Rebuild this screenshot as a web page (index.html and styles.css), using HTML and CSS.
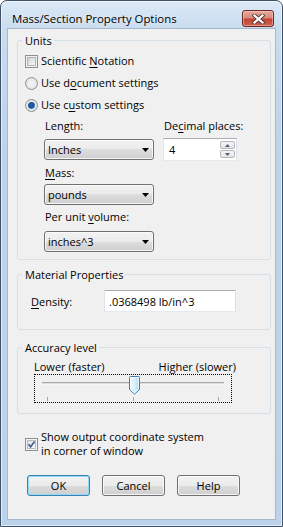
FILE: index.html
```html
<!DOCTYPE html>
<html>
<head>
<meta charset="utf-8">
<title>Mass/Section Property Options</title>
<link rel="stylesheet" href="styles.css">
</head>
<body>
<div class="window">
  <div class="titlebar">
    <span class="title">Mass/Section Property Options</span>
    <div class="close">
      <svg width="13" height="10" viewBox="0 0 13 10">
        <path d="M2.5 1.5 L10.5 8.5 M10.5 1.5 L2.5 8.5" stroke="#5a3b38" stroke-width="4.2" stroke-linecap="square" fill="none"/>
        <path d="M2.5 1.5 L10.5 8.5 M10.5 1.5 L2.5 8.5" stroke="#ffffff" stroke-width="2.2" stroke-linecap="square" fill="none"/>
      </svg>
    </div>
  </div>
  <div class="client">
    <fieldset class="group units">
      <legend>Units</legend>
      <div class="opt opt-sci">
        <span class="checkbox"><span class="box-in"></span></span>
        <span>Scientific <u>N</u>otation</span>
      </div>
      <div class="opt opt-radio">
        <span class="radio"></span>
        <span>Use d<u>o</u>cument settings</span>
      </div>
      <div class="opt opt-radio">
        <span class="radio checked"></span>
        <span>Use c<u>u</u>stom settings</span>
      </div>
      <div class="unit-fields">
        <div class="col-left">
          <div class="field-label">Length:</div>
          <div class="combo combo-length"><span>Inches</span><svg class="arrow" width="7" height="4" viewBox="0 0 7 4"><path d="M0 0 H7 L3.5 4 Z" fill="#000"/></svg></div>
          <div class="field-label label-mass"><u>M</u>ass:</div>
          <div class="combo combo-mass"><span>pounds</span><svg class="arrow" width="7" height="4" viewBox="0 0 7 4"><path d="M0 0 H7 L3.5 4 Z" fill="#000"/></svg></div>
          <div class="field-label label-volume">Per unit <u>v</u>olume:</div>
          <div class="combo combo-volume"><span>inches^3</span><svg class="arrow" width="7" height="4" viewBox="0 0 7 4"><path d="M0 0 H7 L3.5 4 Z" fill="#000"/></svg></div>
        </div>
        <div class="col-right">
          <div class="field-label">De<u>c</u>imal places:</div>
          <div class="spin">
            <span class="spin-value">4</span>
            <div class="spin-buttons">
              <span class="spin-btn"><svg width="5" height="3" viewBox="0 0 5 3"><path d="M0 3 H5 L2.5 0 Z" fill="#4d6185"/></svg></span>
              <span class="spin-btn"><svg width="5" height="3" viewBox="0 0 5 3"><path d="M0 0 H5 L2.5 3 Z" fill="#4d6185"/></svg></span>
            </div>
          </div>
        </div>
      </div>
    </fieldset>

    <fieldset class="group material">
      <legend>Material Properties</legend>
      <div class="density-row">
        <span class="density-label"><u>D</u>ensity:</span>
        <div class="text-input">.0368498 lb/in^3</div>
      </div>
    </fieldset>

    <fieldset class="group accuracy">
      <legend>Accuracy level</legend>
      <div class="accuracy-labels">
        <span>Lower (faster)</span>
        <span>Higher (slower)</span>
      </div>
      <div class="slider">
        <div class="track"></div>
        <div class="ticks"><span></span><span></span><span></span></div>
        <svg class="thumb" width="11" height="19" viewBox="0 0 11 19">
          <defs>
            <linearGradient id="tg" x1="0" y1="0" x2="1" y2="0">
              <stop offset="0" stop-color="#f4fbfe"/>
              <stop offset="0.5" stop-color="#d9f1fc"/>
              <stop offset="1" stop-color="#a9dcf6"/>
            </linearGradient>
          </defs>
          <path d="M1.5 0.5 H9.5 Q10.5 0.5 10.5 1.5 V13.5 L5.5 18.2 L0.5 13.5 V1.5 Q0.5 0.5 1.5 0.5 Z" fill="url(#tg)" stroke="#3c7fb1"/>
          <path d="M1.5 1.5 H9.5 V13 L5.5 16.8 L1.5 13 Z" fill="none" stroke="#ffffff" stroke-opacity="0.7"/>
        </svg>
      </div>
    </fieldset>

    <div class="opt-coord">
      <span class="checkbox checked"><span class="box-in"><svg width="9" height="9" viewBox="0 0 9 9"><path d="M1.5 4.2 L3.6 6.8 L7.6 1.4" stroke="#4a5f97" stroke-width="1.7" fill="none"/></svg></span></span>
      <span class="coord-text">Show output coordinate system<br>in corner of window</span>
    </div>

    <div class="buttons">
      <div class="btn default">OK</div>
      <div class="btn">Cancel</div>
      <div class="btn">Help</div>
    </div>
  </div>
</div>
</body>
</html>
```

FILE: styles.css
```css
* { box-sizing: border-box; }

html, body {
  margin: 0;
  padding: 0;
}

body {
  width: 283px;
  height: 527px;
  overflow: hidden;
  font-family: "Open Sans", "Noto Sans", sans-serif;
  font-size: 11px;
  color: #000;
  background: #ffffff;
}

u {
  text-decoration-thickness: 1px;
  text-underline-offset: 2px;
}

.window {
  width: 283px;
  height: 527px;
  display: flex;
  flex-direction: column;
  border: 1px solid #3f5268;
  border-radius: 7px 7px 0 0;
  background: linear-gradient(to bottom, #dce9f6 0px, #c9dcf0 27px, #bed4eb 140px, #bbd2ea 100%);
  box-shadow: inset 0 0 0 1px rgba(255, 255, 255, 0.55);
}

.titlebar {
  height: 27px;
  flex: none;
  display: flex;
  justify-content: space-between;
  align-items: flex-start;
  padding: 9px 8px 0 11px;
}

.title {
  font-size: 11.4px;
  line-height: 17px;
  white-space: nowrap;
  text-shadow: 0 0 6px rgba(255, 255, 255, 0.9);
}

.close {
  width: 32px;
  height: 17px;
  border: 1px solid #6b2a24;
  border-radius: 3px;
  background: linear-gradient(to bottom, #e7a899 0%, #d88b7c 45%, #c34434 55%, #d0604f 100%);
  box-shadow: inset 0 0 0 1px rgba(255, 220, 210, 0.45);
  display: flex;
  align-items: center;
  justify-content: center;
}

.client {
  flex: 1;
  margin: 0 6px 6px 6px;
  border: 1px solid #a5b8cc;
  background: #f0f0f0;
}

/* group boxes */
.group {
  margin: 0 4px 0 9px;
  padding: 0 0 0 4px;
  border: 1px solid #d5dfe5;
  border-radius: 3px;
  min-width: 0;
}

.group legend {
  padding: 0 2px 0 3px;
  line-height: 15px;
}

.units {
  margin-top: 4px;
  padding-bottom: 7px;
}

.material {
  margin-top: 7px;
  padding-bottom: 17px;
}

.accuracy {
  margin-top: 10px;
  padding-bottom: 10px;
}

/* options */
.opt {
  display: flex;
  align-items: center;
  height: 16px;
  margin-left: 3px;
  line-height: 16px;
  white-space: nowrap;
}

.opt-sci { margin-top: 5px; }
.opt-radio { margin-top: 6px; }

.checkbox {
  width: 13px;
  height: 13px;
  flex: none;
  border: 1px solid #8e8f8f;
  background: #f4f4f4;
  padding: 1px;
  margin-right: 3px;
}

.box-in {
  display: block;
  width: 9px;
  height: 9px;
  border: 1px solid #aeb3b9;
  background: linear-gradient(135deg, #cbcfd5 0%, #e4e6e9 50%, #f7f7f7 100%);
  position: relative;
}

.checkbox.checked .box-in {
  border-color: #b8bcc2;
  background: linear-gradient(135deg, #dfe2e6 0%, #eef0f2 60%, #fafafa 100%);
}

.box-in svg {
  position: absolute;
  left: -1px;
  top: -1px;
}

.radio {
  width: 13px;
  height: 13px;
  flex: none;
  border-radius: 50%;
  border: 1px solid #8e8f8f;
  background: radial-gradient(circle at 50% 50%, #f6f6f6 0%, #e9e9e9 55%, #d2d4d6 100%);
  margin-right: 3px;
  display: flex;
  align-items: center;
  justify-content: center;
}

.radio.checked::before {
  content: "";
  width: 7px;
  height: 7px;
  border-radius: 50%;
  background: radial-gradient(circle at 45% 40%, #2a67b0 0%, #16508f 45%, #4d9ee0 80%, #9cd2f4 100%);
}

/* unit fields */
.unit-fields {
  display: flex;
  gap: 9px;
  margin: 5px 0 0 22px;
}

.col-left {
  width: 110px;
  display: flex;
  flex-direction: column;
}

.col-right {
  width: 74px;
  display: flex;
  flex-direction: column;
}

.field-label {
  height: 16px;
  line-height: 16px;
  padding-left: 1px;
  white-space: nowrap;
}

.label-mass { margin-top: 5px; }
.label-volume { margin-top: 4px; }

.combo {
  height: 21px;
  display: flex;
  align-items: center;
  justify-content: space-between;
  padding: 0 4px 0 3px;
  border: 1px solid #707070;
  border-radius: 3px;
  background: linear-gradient(to bottom, #f2f2f2 0%, #ebebeb 50%, #dddddd 50%, #cfcfcf 100%);
  box-shadow: inset 0 0 0 1px rgba(252, 252, 252, 0.8);
}

.combo-length { margin-top: 5px; }
.combo-mass { margin-top: 3px; }
.combo-volume { margin-top: 6px; }

.spin {
  height: 23px;
  margin-top: 4px;
  display: flex;
  align-items: stretch;
  border: 1px solid;
  border-color: #abadb3 #dbdfe6 #e3e9ef #e2e3ea;
  background: #ffffff;
  padding: 2px 1px 2px 0;
}

.spin-value {
  flex: 1;
  padding-left: 5px;
  display: flex;
  align-items: center;
}

.spin-buttons {
  width: 15px;
  display: flex;
  flex-direction: column;
  gap: 1px;
}

.spin-btn {
  flex: 1;
  border: 1px solid #b5b8bd;
  border-radius: 2px;
  background: linear-gradient(to bottom, #f6f6f6, #e4e4e4);
  display: flex;
  align-items: center;
  justify-content: center;
}

/* density */
.density-row {
  display: flex;
  align-items: center;
  margin: 8px 0 0 9px;
  height: 22px;
}

.density-label {
  width: 73px;
}

.text-input {
  width: 132px;
  height: 22px;
  border: 1px solid;
  border-color: #abadb3 #dbdfe6 #e3e9ef #e2e3ea;
  background: #ffffff;
  padding-left: 4px;
  display: flex;
  align-items: center;
  white-space: nowrap;
}

/* accuracy */
.accuracy-labels {
  display: flex;
  justify-content: space-between;
  width: 202px;
  margin: 4px 0 0 12px;
  height: 15px;
  line-height: 15px;
  white-space: nowrap;
}

.slider {
  position: relative;
  width: 198px;
  height: 29px;
  margin-left: 12px;
  border: 1px dotted #000;
}

.track {
  width: 182px;
  height: 3px;
  margin: 7px 0 0 7px;
  background: linear-gradient(to bottom, #a9a9a9 0px, #a9a9a9 1px, #dcdcdc 1px, #dcdcdc 2px, #f6f6f6 2px);
}

.ticks {
  display: flex;
  justify-content: space-between;
  width: 172px;
  height: 4px;
  margin: 12px 0 0 12px;
}

.ticks span {
  width: 1px;
  height: 4px;
  background: #a8a8a8;
}

.thumb {
  position: absolute;
  left: 94px;
  top: 1px;
}

/* bottom checkbox */
.opt-coord {
  display: flex;
  align-items: center;
  margin: 16px 0 0 17px;
}

.coord-text {
  line-height: 14px;
  white-space: nowrap;
}

/* buttons */
.buttons {
  display: flex;
  gap: 12px;
  margin: 17px 0 0 19px;
}

.btn {
  width: 63px;
  height: 21px;
  border: 1px solid #707070;
  border-radius: 3px;
  background: linear-gradient(to bottom, #f2f2f2 0%, #ebebeb 50%, #dddddd 50%, #cfcfcf 100%);
  box-shadow: inset 0 0 0 1px rgba(252, 252, 252, 0.85);
  display: flex;
  align-items: center;
  justify-content: center;
  line-height: 15px;
}

.btn.default {
  border-color: #3c7fb1;
  box-shadow: inset 0 0 0 1px #8fdcf8;
}
```
